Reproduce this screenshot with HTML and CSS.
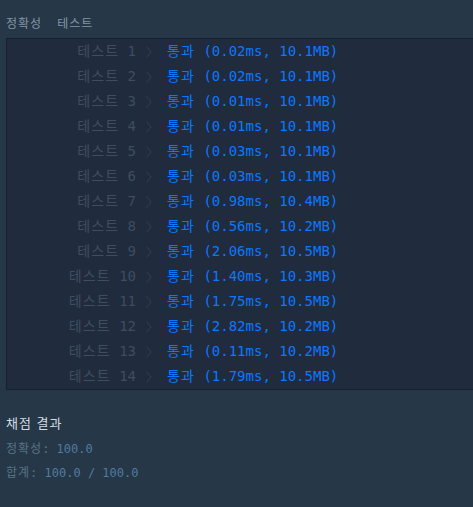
FILE: index.html
```html
<!DOCTYPE html>
<html lang="ko">
<head>
<meta charset="utf-8">
<link rel="stylesheet" href="styles.css">
</head>
<body>
<div class="tabs"><span class="tab">정확성</span><span class="tab">테스트</span></div>
<div class="box">
  <div class="row"><span class="label"><span class="ko">테스트</span> 1</span><svg class="chev" width="6" height="12" viewBox="0 0 6 12"><polyline points="0.5,0.5 5,6 0.5,11.5"/></svg><span class="res"><span class="ko">통과</span> (0.02ms, 10.1MB)</span></div>
  <div class="row"><span class="label"><span class="ko">테스트</span> 2</span><svg class="chev" width="6" height="12" viewBox="0 0 6 12"><polyline points="0.5,0.5 5,6 0.5,11.5"/></svg><span class="res"><span class="ko">통과</span> (0.02ms, 10.1MB)</span></div>
  <div class="row"><span class="label"><span class="ko">테스트</span> 3</span><svg class="chev" width="6" height="12" viewBox="0 0 6 12"><polyline points="0.5,0.5 5,6 0.5,11.5"/></svg><span class="res"><span class="ko">통과</span> (0.01ms, 10.1MB)</span></div>
  <div class="row"><span class="label"><span class="ko">테스트</span> 4</span><svg class="chev" width="6" height="12" viewBox="0 0 6 12"><polyline points="0.5,0.5 5,6 0.5,11.5"/></svg><span class="res"><span class="ko">통과</span> (0.01ms, 10.1MB)</span></div>
  <div class="row"><span class="label"><span class="ko">테스트</span> 5</span><svg class="chev" width="6" height="12" viewBox="0 0 6 12"><polyline points="0.5,0.5 5,6 0.5,11.5"/></svg><span class="res"><span class="ko">통과</span> (0.03ms, 10.1MB)</span></div>
  <div class="row"><span class="label"><span class="ko">테스트</span> 6</span><svg class="chev" width="6" height="12" viewBox="0 0 6 12"><polyline points="0.5,0.5 5,6 0.5,11.5"/></svg><span class="res"><span class="ko">통과</span> (0.03ms, 10.1MB)</span></div>
  <div class="row"><span class="label"><span class="ko">테스트</span> 7</span><svg class="chev" width="6" height="12" viewBox="0 0 6 12"><polyline points="0.5,0.5 5,6 0.5,11.5"/></svg><span class="res"><span class="ko">통과</span> (0.98ms, 10.4MB)</span></div>
  <div class="row"><span class="label"><span class="ko">테스트</span> 8</span><svg class="chev" width="6" height="12" viewBox="0 0 6 12"><polyline points="0.5,0.5 5,6 0.5,11.5"/></svg><span class="res"><span class="ko">통과</span> (0.56ms, 10.2MB)</span></div>
  <div class="row"><span class="label"><span class="ko">테스트</span> 9</span><svg class="chev" width="6" height="12" viewBox="0 0 6 12"><polyline points="0.5,0.5 5,6 0.5,11.5"/></svg><span class="res"><span class="ko">통과</span> (2.06ms, 10.5MB)</span></div>
  <div class="row"><span class="label"><span class="ko">테스트</span> 10</span><svg class="chev" width="6" height="12" viewBox="0 0 6 12"><polyline points="0.5,0.5 5,6 0.5,11.5"/></svg><span class="res"><span class="ko">통과</span> (1.40ms, 10.3MB)</span></div>
  <div class="row"><span class="label"><span class="ko">테스트</span> 11</span><svg class="chev" width="6" height="12" viewBox="0 0 6 12"><polyline points="0.5,0.5 5,6 0.5,11.5"/></svg><span class="res"><span class="ko">통과</span> (1.75ms, 10.5MB)</span></div>
  <div class="row"><span class="label"><span class="ko">테스트</span> 12</span><svg class="chev" width="6" height="12" viewBox="0 0 6 12"><polyline points="0.5,0.5 5,6 0.5,11.5"/></svg><span class="res"><span class="ko">통과</span> (2.82ms, 10.2MB)</span></div>
  <div class="row"><span class="label"><span class="ko">테스트</span> 13</span><svg class="chev" width="6" height="12" viewBox="0 0 6 12"><polyline points="0.5,0.5 5,6 0.5,11.5"/></svg><span class="res"><span class="ko">통과</span> (0.11ms, 10.2MB)</span></div>
  <div class="row"><span class="label"><span class="ko">테스트</span> 14</span><svg class="chev" width="6" height="12" viewBox="0 0 6 12"><polyline points="0.5,0.5 5,6 0.5,11.5"/></svg><span class="res"><span class="ko">통과</span> (1.79ms, 10.5MB)</span></div>
</div>
<div class="summary">
  <div class="title">채점 결과</div>
  <div class="line"><span class="key"><span class="ko-s">정확성</span>:</span> <span class="val">100.0</span></div>
  <div class="line"><span class="key"><span class="ko-s">합계</span>:</span> <span class="val">100.0 / 100.0</span></div>
</div>
</body>
</html>
```
FILE: styles.css
```css
html, body {
  margin: 0;
  padding: 0;
}
body {
  background: #263747;
  font-family: "DejaVu Sans Mono", "Noto Sans CJK KR", monospace;
  width: 473px;
  height: 507px;
  overflow: hidden;
}
.tabs {
  display: flex;
  gap: 15px;
  padding: 14px 6px 0;
  height: 24px;
  font-family: "Noto Sans CJK KR", sans-serif;
  font-size: 12px;
  line-height: 17px;
  letter-spacing: 1px;
  color: #8295a7;
}
.box {
  margin-left: 6px;
  background: #202b3d;
  border: 1px solid #172030;
  border-right: none;
}
.row {
  display: flex;
  align-items: center;
  box-sizing: border-box;
  height: 25px;
  padding-bottom: 3px;
  font-size: 14px;
  white-space: nowrap;
}
.ko {
  letter-spacing: 1.1px;
}
.ko-s {
  letter-spacing: 1px;
}
.label {
  width: 129px;
  text-align: right;
  color: #3f4d60;
}
.chev {
  margin: 4px 15px 0 10px;
  fill: none;
  stroke: #33404f;
  stroke-width: 1;
}
.res {
  color: #0c78ff;
}
.summary {
  padding: 23px 6px 0;
}
.title {
  font-family: "Noto Sans CJK KR", sans-serif;
  font-size: 13px;
  line-height: 20px;
  letter-spacing: 1px;
  color: #d3dbe3;
  margin-bottom: 4px;
}
.line {
  font-size: 12px;
  line-height: 24px;
  white-space: pre;
}
.key {
  color: #587488;
}
.val {
  color: #4f7ca0;
}
```
